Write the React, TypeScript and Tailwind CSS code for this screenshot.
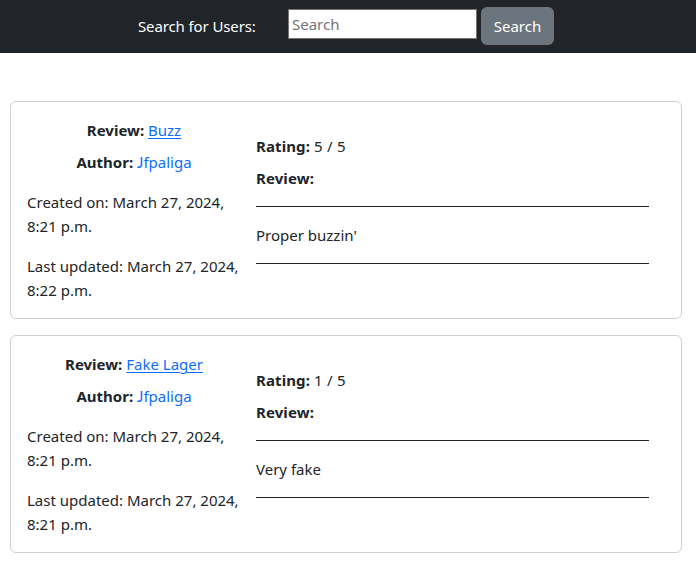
type Review = {
  subject: string;
  rating: number;
  created: string;
  updated: string;
  body: string;
};

const reviews: Review[] = [
  { subject: "Buzz", rating: 5, created: "March 27, 2024, 8:21 p.m.", updated: "March 27, 2024, 8:22 p.m.", body: "Proper buzzin'" },
  { subject: "Fake Lager", rating: 1, created: "March 27, 2024, 8:21 p.m.", updated: "March 27, 2024, 8:21 p.m.", body: "Very fake" },
];

function Card({ review }: { review: Review }) {
  return (
    <article className="flex h-[218px] rounded-md border border-[#cfd0d1] bg-white">
      <div className="mr-4 ml-4 w-[213px] shrink-0 pt-4">
        <p className="pl-px text-center">
          <strong>Review:</strong>{" "}
          <a className="text-[#0d6efd] underline decoration-1 underline-offset-2">{review.subject}</a>
        </p>
        <p className="mt-2 pl-px text-center">
          <strong>Author:</strong>{" "}
          <a className="text-[#0d6efd]"><span className="font-['Lato',sans-serif]">J</span>fpaliga</a>
        </p>
        <p className="mt-4">{`Created on: ${review.created}`}</p>
        <p className="mt-4">{`Last updated: ${review.updated}`}</p>
      </div>
      <div className="w-[393px] pt-8">
        <p><strong className="tracking-[0.1px]">Rating:</strong> <span className="tracking-[0.3px]">{`${review.rating} / 5`}</span></p>
        <p className="mt-2"><strong className="tracking-[0.1px]">Review:</strong></p>
        <hr className="mt-4 border-[#212529]" />
        <p className="mt-4">{review.body}</p>
        <hr className="mt-4 border-[#212529]" />
      </div>
    </article>
  );
}

export default function App() {
  return (
    <main className="min-h-[567px] bg-white font-['Noto_Sans',sans-serif] text-[15px] leading-6 text-[#212529]">
      <header className="flex h-[53px] items-start bg-[#212529] pl-[138px] text-white">
        <label htmlFor="user-search" className="w-[150px] pt-3.5 tracking-[-0.12px]">Search for Users:</label>
        <input id="user-search" placeholder="Search" className="mt-[9px] h-[30px] w-[189px] border border-[#767676] bg-white px-[3px] placeholder:text-[#757575]" />
        <button className="mt-[7px] ml-1 h-[38px] w-[73px] rounded-md bg-[#6c757d] pb-px">Search</button>
      </header>
      <section className="flex flex-col gap-4 pt-12 pr-[14px] pl-[10px]">
        {reviews.map((review) => <Card key={review.subject} review={review} />)}
      </section>
    </main>
  );
}
